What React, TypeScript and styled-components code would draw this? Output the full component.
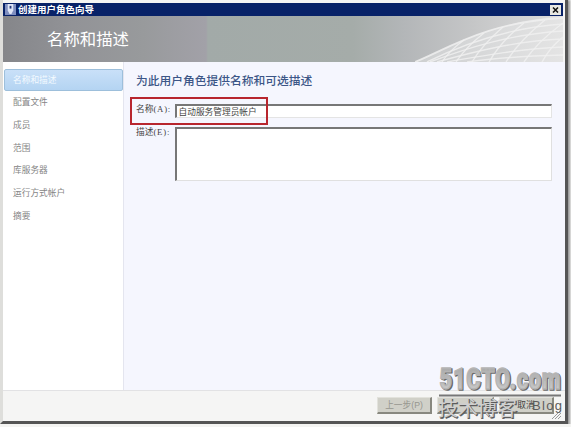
import React, { useState } from "react"
import styled, { createGlobalStyle } from "styled-components"

const STEPS = ["名称和描述", "配置文件", "成员", "范围", "库服务器", "运行方式帐户", "摘要"]

const GlobalStyle = createGlobalStyle`
  * {
    box-sizing: border-box;
  }
  body {
    margin: 0;
    overflow: hidden;
    background: #f4f4f2;
    font-family: "Liberation Sans", "Noto Sans CJK SC", sans-serif;
  }
`

interface FieldLabelProps {
  text: string
  hotkey: string
}

const FieldLabel: React.FC<FieldLabelProps> = ({ text, hotkey }) => (
  <S.Label>
    {text}
    <S.Hotkey>({hotkey}):</S.Hotkey>
  </S.Label>
)

const HeaderMesh: React.FC = () => (
  <S.Mesh viewBox="0 0 148 46" preserveAspectRatio="none">
    <defs>
      <linearGradient id="mesh" x1="0" x2="1" y1="0" y2="0">
        <stop offset="0" stopColor="#cdcfd0" />
        <stop offset="0.5" stopColor="#d8d9da" />
        <stop offset="1" stopColor="#e4e4e4" />
      </linearGradient>
    </defs>
    <path d="M0 46C34 32 72 6 148 0V46Z" fill="url(#mesh)" />
    <g fill="none" stroke="#f0f0f0" strokeWidth="1.4" strokeOpacity="0.85">
      <path d="M0 46C34 32 72 6 148 2" strokeWidth="1.8" />
      <path d="M12 46C48 28 92 12 148 8" />
      <path d="M15 46C52 32 96 18 148 15" />
      <path d="M22 46C58 36 100 25 148 23" />
      <path d="M32 46C66 40 104 33 148 31" />
      <path d="M52 46C80 42 112 40 148 39" />
      <path d="M27 46Q34 35 49 24" />
      <path d="M41 46Q51 31 69 17" />
      <path d="M57 46Q67 29 88 11" />
      <path d="M74 46Q86 25 109 7" />
      <path d="M91 46Q104 25 130 4" />
      <path d="M109 46Q122 26 148 7" />
      <path d="M127 46Q135 31 148 21" />
    </g>
  </S.Mesh>
)

const Watermark: React.FC = () => (
  <S.Watermark viewBox="0 0 132 60">
    <defs>
      <linearGradient id="metal" x1="0" x2="0" y1="0" y2="1">
        <stop offset="0" stopColor="#a2a2a2" />
        <stop offset="1" stopColor="#d0d0d0" />
      </linearGradient>
    </defs>
    <g
      transform="scale(0.75 1)"
      fontFamily="Roboto, Liberation Sans, sans-serif"
      fontWeight="900"
      fontSize="29"
    >
      <text x="9" y="27.5" textLength="161" fill="#6a6a6a" stroke="#6a6a6a" strokeWidth="1.6">
        51CTO.com
      </text>
      <text x="7.5" y="26" textLength="161" fill="url(#metal)" stroke="#b4b4b4" strokeWidth="1.4">
        51CTO.com
      </text>
    </g>
    <path d="M5 32.5H127" stroke="#777" strokeWidth="2" />
    <g fontFamily="Noto Sans CJK SC, sans-serif" fontSize="20">
      <text x="5" y="54" textLength="79" fill="#5c5c5c" stroke="#5c5c5c" strokeWidth="0.6">
        技术博客
      </text>
      <text x="4" y="53" textLength="79" fill="#cfcfcf">
        技术博客
      </text>
    </g>
    <text x="98" y="47" fontFamily="Liberation Sans, sans-serif" fontSize="13" textLength="30" fill="#5c5c5c">
      Blog
    </text>
  </S.Watermark>
)

export default function App() {
  const [active, setActive] = useState<number>(0)

  return (
    <>
      <GlobalStyle />
      <S.Window>
        {/* Title bar */}
        <S.TitleBar>
          <S.AppIcon viewBox="0 0 12 12">
            <rect width="12" height="12" fill="#7f8fc0" />
            <path d="M3 0H9V7L7 11H5L3 7Z" fill="#dfe5f5" />
            <path d="M5 2H7V5H5Z" fill="#26397f" />
          </S.AppIcon>
          <S.WindowTitle>创建用户角色向导</S.WindowTitle>
          <S.CloseButton aria-label="关闭">
            <svg width="7" height="6" viewBox="0 0 7 6">
              <path d="M1 0.5L6 5.5M6 0.5L1 5.5" stroke="#111" strokeWidth="1.5" />
            </svg>
          </S.CloseButton>
        </S.TitleBar>
        {/* Header */}
        <S.Header>
          <S.HeaderTitle>名称和描述</S.HeaderTitle>
          <HeaderMesh />
        </S.Header>
        {/* Steps and form */}
        <S.Body>
          <S.Sidebar>
            {STEPS.map((step, index) => (
              <S.Step key={step} active={index === active} onClick={() => setActive(index)}>
                {step}
              </S.Step>
            ))}
          </S.Sidebar>
          <S.Content>
            <S.Heading>为此用户角色提供名称和可选描述</S.Heading>
            <S.NameRow>
              <FieldLabel text="名称" hotkey="A" />
              <S.Input defaultValue="自动服务管理员帐户" />
              <S.Highlight />
            </S.NameRow>
            <S.DescriptionRow>
              <FieldLabel text="描述" hotkey="E" />
              <S.TextArea />
            </S.DescriptionRow>
          </S.Content>
        </S.Body>
        {/* Footer */}
        <S.Footer>
          <S.Button width={55} muted>
            上一步(P)
          </S.Button>
          <S.Button width={57} />
          <S.Button width={55}>取消</S.Button>
          <S.Grip viewBox="0 0 10 10">
            <path d="M1 10L10 1M4 10L10 4M7 10L10 7" stroke="#999" strokeWidth="1" />
          </S.Grip>
        </S.Footer>
        <Watermark />
      </S.Window>
    </>
  )
}

const S = {
  Window: styled.div`
    position: relative;
    display: flex;
    flex-direction: column;
    width: 568px;
    height: 424px;
    padding-top: 3px;
    border-left: 3px solid #dededb;
    border-right: 3px solid #555;
    border-bottom: 3px solid #555;
    background: #f5f5f4;
    box-shadow: 1px 1px 2px 1px #999;
  `,
  TitleBar: styled.div`
    display: flex;
    align-items: center;
    height: 13px;
    margin-right: 2px;
    padding: 0 2px;
    background: #082268;
    color: #fff;
  `,
  AppIcon: styled.svg`
    width: 11px;
    height: 11px;
    margin-right: 2px;
  `,
  WindowTitle: styled.div`
    flex: 1;
    font-size: 9.5px;
    font-weight: 700;
    line-height: 13px;
    white-space: nowrap;
  `,
  CloseButton: styled.button`
    display: flex;
    align-items: center;
    justify-content: center;
    width: 11px;
    height: 10px;
    padding: 0;
    border: 0;
    background: #e8e8e2;
  `,
  Header: styled.div`
    display: flex;
    align-items: center;
    justify-content: space-between;
    height: 46px;
    margin-right: 2px;
    padding-left: 44px;
    background: linear-gradient(
      90deg,
      #85868a 0,
      #929397 70px,
      #989a9c 140px,
      #a2a1a8 203px,
      #a2aaa8 205px,
      #a5aca9 350px,
      #b3b6b8 400px,
      #c5c6c7 470px,
      #dedede 560px
    );
  `,
  HeaderTitle: styled.div`
    color: #fff;
    font-size: 16.4px;
    line-height: 46px;
  `,
  Mesh: styled.svg`
    width: 148px;
    height: 46px;
  `,
  Body: styled.div`
    display: flex;
    height: 328px;
  `,
  Sidebar: styled.div`
    flex: none;
    width: 121px;
    padding: 7px 0 0 1px;
    border-right: 1px solid #e4e5ef;
    background: #fff;
  `,
  Step: styled.div<{ active: boolean }>`
    height: ${({ active }) => (active ? "22px" : "22.8px")};
    padding-left: ${({ active }) => (active ? "8px" : "9px")};
    border: ${({ active }) => (active ? "1px solid #9dbfdb" : "none")};
    border-radius: 2px;
    background: ${({ active }) => (active ? "linear-gradient(#c9e0f8, #b4d4f2)" : "none")};
    color: ${({ active }) => (active ? "#f4faff" : "#858585")};
    font-size: 8.7px;
    line-height: ${({ active }) => (active ? "20px" : "23.6px")};
    white-space: nowrap;
    cursor: pointer;
  `,
  Content: styled.div`
    flex: 1;
    padding: 10px 12px 0 12px;
    background: #f5f6fe;
  `,
  Heading: styled.div`
    height: 32px;
    color: #3c5687;
    font-size: 11.75px;
    font-weight: 500;
    line-height: 18px;
    white-space: nowrap;
  `,
  NameRow: styled.div`
    position: relative;
    display: flex;
    height: 23px;
  `,
  DescriptionRow: styled.div`
    display: flex;
  `,
  Label: styled.div`
    flex: none;
    width: 38.5px;
    color: #444;
    font-size: 8.7px;
    line-height: 10px;
    white-space: nowrap;
  `,
  Hotkey: styled.span`
    font-family: "Liberation Serif", serif;
    font-size: 8.7px;
    letter-spacing: 0.8px;
  `,
  Input: styled.input`
    width: 377px;
    height: 14px;
    padding: 0 2px;
    border: 1px solid #e4e4e4;
    border-top: 2px solid #777;
    border-left: 2px solid #777;
    outline: 0;
    background: #fff;
    color: #444;
    font-family: "Noto Sans CJK SC", sans-serif;
    font-size: 8.7px;
    line-height: 11px;
  `,
  TextArea: styled.textarea`
    width: 377px;
    height: 54px;
    border: 1px solid #e0e0e0;
    border-top: 2px solid #777;
    border-left: 2px solid #777;
    outline: 0;
    background: #fff;
    resize: none;
  `,
  Highlight: styled.div`
    position: absolute;
    top: -7px;
    left: -6px;
    width: 138px;
    height: 28px;
    border: 2px solid #b8262e;
    pointer-events: none;
  `,
  Footer: styled.div`
    display: flex;
    gap: 5px;
    height: 31px;
    padding: 6px 1px 0 374px;
    border-top: 1px solid #e2e2e4;
    background: #f5f5f4;
  `,
  Button: styled.button<{ width: number; muted?: boolean }>`
    flex: none;
    width: ${({ width }) => width}px;
    height: 17px;
    padding: 0;
    border: 1px solid #e2e2dc;
    border-right: 2px solid #88887f;
    border-bottom: 2px solid #88887f;
    background: #d0d0c8;
    color: ${({ muted }) => (muted ? "#96968f" : "#444")};
    font-family: "Liberation Sans", "Noto Sans CJK SC", sans-serif;
    font-size: 8.7px;
    line-height: 13px;
  `,
  Grip: styled.svg`
    align-self: flex-end;
    flex: none;
    width: 10px;
    height: 10px;
    margin: 0 0 2px -8px;
  `,
  Watermark: styled.svg`
    position: absolute;
    top: 363px;
    left: 431px;
    width: 132px;
    height: 60px;
    overflow: visible;
    pointer-events: none;
  `,
}
